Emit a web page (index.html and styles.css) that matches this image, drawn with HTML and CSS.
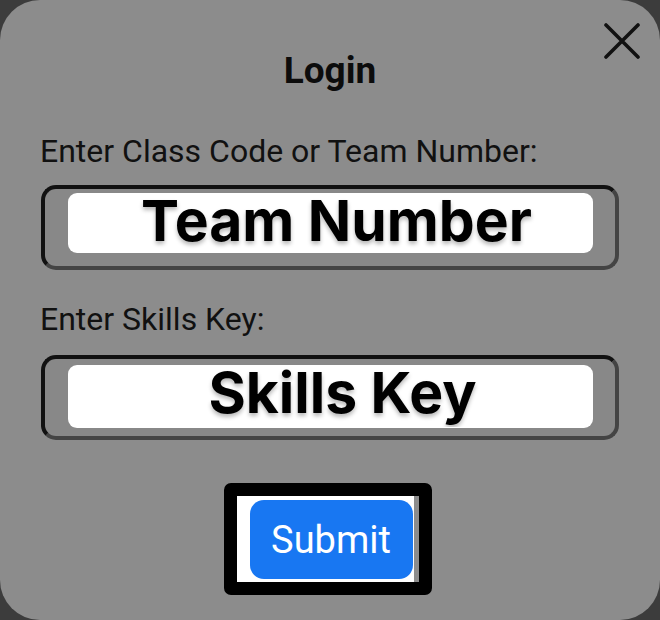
FILE: index.html
```html
<!DOCTYPE html>
<html lang="en">
<head>
<meta charset="utf-8">
<title>Login</title>
<link rel="stylesheet" href="styles.css">
</head>
<body>
<div class="modal">
  <button class="close" type="button" aria-label="Close">
    <svg width="36" height="36" viewBox="0 0 36 36"><path d="M2 2 L34 34 M34 2 L2 34" stroke="#111" stroke-width="3.6" stroke-linecap="round" fill="none"/></svg>
  </button>
  <h1 class="title">Login</h1>
  <form class="form">
    <label class="label label-first" for="team">Enter Class Code or Team Number:</label>
    <div class="field field-first">
      <input class="input" id="team" type="text" placeholder="Team Number">
    </div>
    <label class="label label-second" for="key">Enter Skills Key:</label>
    <div class="field field-second">
      <input class="input input-tall" id="key" type="text" placeholder="Skills Key">
    </div>
    <div class="submit-row">
      <div class="submit-frame">
        <div class="submit-bg">
          <button class="submit" type="button">Submit</button>
        </div>
      </div>
    </div>
  </form>
</div>
</body>
</html>
```
FILE: styles.css
```css
html, body {
  margin: 0;
  padding: 0;
}
body {
  background: #3c3c3c;
  font-family: Roboto, "Liberation Sans", sans-serif;
  color: #111;
}
.modal {
  position: relative;
  box-sizing: border-box;
  width: 660px;
  height: 620px;
  background: #8c8c8c;
  border-radius: 40px;
  padding: 49px 41px 0 41px;
  overflow: hidden;
}
.close {
  position: absolute;
  top: 23px;
  right: 20px;
  width: 36px;
  height: 36px;
  padding: 0;
  border: 0;
  background: transparent;
  display: block;
}
.close svg {
  display: block;
}
.title {
  margin: 0;
  font-size: 37px;
  line-height: 44px;
  font-weight: 700;
  text-align: center;
  color: #0c0c0c;
}
.form {
  margin: 0;
}
.label {
  display: block;
  font-size: 32px;
  line-height: 36px;
  margin-left: -1px;
}
.label-first {
  margin-top: 40px;
  margin-bottom: 16px;
}
.label-second {
  margin-top: 31px;
  margin-bottom: 18px;
}
.field {
  border: 4px solid;
  border-color: #111 #444 #444 #111;
  border-radius: 15px;
  background: #888;
}
.field-first {
  padding: 4px 22px 13px 23px;
}
.field-second {
  padding: 6px 22px 8px 23px;
}
.input {
  display: block;
  box-sizing: border-box;
  width: 100%;
  height: 60px;
  margin: 0;
  border: 0;
  border-radius: 9px;
  background: #fff;
  padding: 0 0 6px 12px;
  font-family: Inter, "Liberation Sans", sans-serif;
  font-weight: 700;
  font-size: 57px;
  line-height: 54px;
  text-align: center;
  color: #000;
  outline: none;
}
.input-tall {
  height: 63px;
  padding: 0 0 9px 24px;
}
.input::placeholder {
  color: #000;
  opacity: 1;
  text-shadow: 0 3px 4px rgba(0, 0, 0, 0.28);
}
.submit-row {
  display: flex;
  justify-content: center;
  margin-top: 43px;
  padding-right: 5px;
}
.submit-frame {
  border: 13px solid #000;
  border-radius: 7px;
  background: #8c8c8c;
  display: flex;
  padding-right: 5px;
}
.submit-bg {
  background: #fff;
  padding: 4px 1px 3px 13px;
}
.submit {
  display: block;
  width: 163px;
  height: 79px;
  border: 0;
  border-radius: 14px;
  background: #1877f2;
  color: #fff;
  font-family: Roboto, "Liberation Sans", sans-serif;
  font-size: 38px;
  padding: 0;
}
```
